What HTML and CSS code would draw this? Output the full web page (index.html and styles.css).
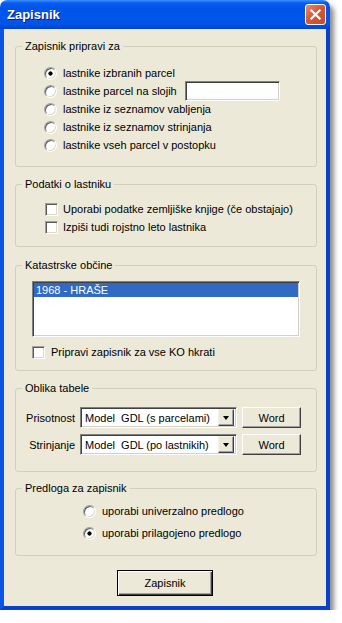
FILE: index.html
```html
<!DOCTYPE html>
<html lang="sl">
<head>
    <meta charset="UTF-8">
    <meta name="viewport" content="width=device-width, initial-scale=1.0">
    <title>Zapisnik</title>
    <link rel="stylesheet" href="styles.css">
</head>
<body>
    <div class="window">
        <div class="titlebar">
            <span class="title">Zapisnik</span>
            <button class="close" title="Zapri">
                <svg viewBox="0 0 21 21" width="21" height="21">
                    <path d="M6 6 L15 15 M15 6 L6 15" stroke="#fff" stroke-width="2.4" stroke-linecap="square"/>
                </svg>
            </button>
        </div>

        <div class="client">
            <fieldset class="group g-source">
                <legend>Zapisnik pripravi za</legend>
                <label class="row"><input type="radio" class="radio" name="src" checked><span>lastnike izbranih parcel</span></label>
                <label class="row"><input type="radio" class="radio" name="src"><span>lastnike parcel na slojih</span><input type="text" class="field layers"></label>
                <label class="row"><input type="radio" class="radio" name="src"><span>lastnike iz seznamov vabljenja</span></label>
                <label class="row"><input type="radio" class="radio" name="src"><span>lastnike iz seznamov strinjanja</span></label>
                <label class="row"><input type="radio" class="radio" name="src"><span>lastnike vseh parcel v postopku</span></label>
            </fieldset>

            <fieldset class="group g-owner">
                <legend>Podatki o lastniku</legend>
                <label class="row"><input type="checkbox" class="check"><span>Uporabi podatke zemljiške knjige (če obstajajo)</span></label>
                <label class="row"><input type="checkbox" class="check"><span>Izpiši tudi rojstno leto lastnika</span></label>
            </fieldset>

            <fieldset class="group g-ko">
                <legend>Katastrske občine</legend>
                <div class="listbox">
                    <div class="list-item selected">1968 - HRAŠE</div>
                </div>
                <label class="row"><input type="checkbox" class="check"><span>Pripravi zapisnik za vse KO hkrati</span></label>
            </fieldset>

            <fieldset class="group g-table">
                <legend>Oblika tabele</legend>
                <div class="table-grid">
                    <span class="grid-label">Prisotnost</span>
                    <div class="combo">
                        <span class="combo-value">Model&nbsp; GDL (s parcelami)</span>
                        <span class="combo-arrow"></span>
                    </div>
                    <button class="btn">Word</button>

                    <span class="grid-label">Strinjanje</span>
                    <div class="combo">
                        <span class="combo-value">Model&nbsp; GDL (po lastnikih)</span>
                        <span class="combo-arrow"></span>
                    </div>
                    <button class="btn">Word</button>
                </div>
            </fieldset>

            <fieldset class="group g-template">
                <legend>Predloga za zapisnik</legend>
                <label class="row"><input type="radio" class="radio" name="tpl"><span>uporabi univerzalno predlogo</span></label>
                <label class="row"><input type="radio" class="radio" name="tpl" checked><span>uporabi prilagojeno predlogo</span></label>
            </fieldset>

            <div class="actions">
                <button class="btn btn-default">Zapisnik</button>
            </div>
        </div>
    </div>
</body>
</html>
```

FILE: styles.css
```css
body {
    margin: 0;
    background-color: #fff;
    font-family: "Liberation Sans", Arial, sans-serif;
    font-size: 11px;
    color: #000;
}
.window {
    width: 330px;
    border-radius: 7px 7px 0 0;
    box-shadow: 4px 5px 5px rgba(0, 0, 0, 0.45);
}

/* title bar */
.titlebar {
    height: 29px;
    display: flex;
    align-items: center;
    justify-content: space-between;
    padding: 0 4px 0 7px;
    border-radius: 7px 7px 0 0;
    background: linear-gradient(#3d8fff 0, #0a5cf0 3px, #0054e8 8px, #0057ec 60%, #0052e4 85%, #0043cc 100%);
}
.title {
    color: #fff;
    font-weight: bold;
    font-size: 13px;
    text-shadow: 1px 1px #0a1c7e;
}
.close {
    width: 21px;
    height: 21px;
    padding: 0;
    border: 1px solid #fff;
    border-radius: 3px;
    background: linear-gradient(135deg, #e9886b, #d65a36 45%, #c94a28);
    display: flex;
    align-items: center;
    justify-content: center;
}
.close svg {
    width: 19px;
    height: 19px;
}

/* client area */
.client {
    background-color: #ece9d8;
    border: 4px solid #0842c8;
    border-top: 0;
    border-left-color: #0a55e6;
    padding: 11px 0 10px;
}
.group {
    margin: 0 9px 0 11px;
    padding: 0;
    border: 1px solid #d0d0bf;
    border-radius: 3px;
    min-width: 0;
}
.group legend {
    margin-left: 6px;
    padding: 0 3px;
    line-height: 13px;
}
.row {
    display: flex;
    align-items: center;
    height: 18px;
    white-space: nowrap;
}

.g-source {
    padding: 11px 0 12px;
}
.g-source .row {
    margin-left: 28px;
}
.g-owner {
    margin-top: 11px;
    padding: 9px 0 10px;
}
.g-owner .row {
    margin-left: 29px;
}
.g-ko {
    margin-top: 12px;
    padding: 9px 0 9px;
}
.g-ko .listbox,
.g-ko .row {
    margin-left: 16px;
}
.g-table {
    margin-top: 11px;
    padding: 12px 0 16px;
}
.g-template {
    margin-top: 10px;
    padding: 5px 0 11px;
}
.g-template .row {
    height: 22px;
    margin-left: 67px;
}

/* radios and checkboxes */
.radio, .check {
    appearance: none;
    width: 13px;
    height: 13px;
    margin: 0 6px 0 0;
    background-color: #fff;
    border: 1px solid;
    border-color: #a0a0a0 #fff #fff #a0a0a0;
    box-shadow: inset 1px 1px #5a5a5a, inset -1px -1px #dcd8cc;
    flex: none;
}
.radio {
    border-radius: 50%;
}
.radio:checked {
    background: radial-gradient(circle, #000 0, #000 1.8px, #fff 2.4px);
}
.check {
    margin-right: 5px;
}
.g-ko .row .check {
    margin-right: 6px;
}

/* sunken fields */
.field {
    width: 95px;
    height: 20px;
    box-sizing: border-box;
    margin: 0 0 0 8px;
    padding: 0;
    background-color: #fff;
    border: 1px solid;
    border-color: #808080 #fff #fff #808080;
    box-shadow: inset 1px 1px #404040, inset -1px -1px #d4d0c8;
}
.listbox {
    width: 268px;
    height: 56px;
    box-sizing: border-box;
    padding: 1px;
    background-color: #fff;
    border: 1px solid;
    border-color: #808080 #fff #fff #808080;
    box-shadow: inset 1px 1px #404040, inset -1px -1px #d4d0c8;
    margin-bottom: 6px;
}
.list-item {
    height: 14px;
    line-height: 14px;
    padding-left: 2px;
}
.list-item.selected {
    background-color: #316ac5;
    color: #fff;
}

/* table format grid */
.table-grid {
    display: grid;
    grid-template-columns: 49px 157px 59px;
    grid-auto-rows: 21px;
    column-gap: 5px;
    row-gap: 6px;
    align-items: center;
    margin-left: 10px;
}
.grid-label {
    text-align: right;
}
.combo {
    display: flex;
    align-items: center;
    height: 21px;
    box-sizing: border-box;
    padding: 2px 2px 2px 4px;
    background-color: #fff;
    border: 1px solid;
    border-color: #808080 #fff #fff #808080;
    box-shadow: inset 1px 1px #404040, inset -1px -1px #d4d0c8;
}
.combo-value {
    flex: 1;
    white-space: nowrap;
    overflow: hidden;
}
.combo-arrow {
    width: 16px;
    height: 17px;
    box-sizing: border-box;
    background-color: #ece9d8;
    border: 1px solid;
    border-color: #f4f2e8 #404040 #404040 #f4f2e8;
    box-shadow: inset -1px -1px #a0a0a0;
    display: flex;
    align-items: center;
    justify-content: center;
}
.combo-arrow::after {
    content: "";
    border-left: 3.5px solid transparent;
    border-right: 3.5px solid transparent;
    border-top: 4px solid #000;
}

/* push buttons */
.btn {
    height: 21px;
    padding: 0;
    font-family: inherit;
    font-size: 11px;
    color: #000;
    background-color: #ece9d8;
    border: 1px solid;
    border-color: #fff #404040 #404040 #fff;
    box-shadow: inset -1px -1px #a0a0a0;
}
.actions {
    display: flex;
    justify-content: center;
    margin-top: 14px;
}
.btn-default {
    width: 96px;
    height: 26px;
    border: 1px solid #000;
    box-shadow: inset 1px 1px #fff, inset -1px -1px #404040, inset -2px -2px #a0a0a0;
}
```
